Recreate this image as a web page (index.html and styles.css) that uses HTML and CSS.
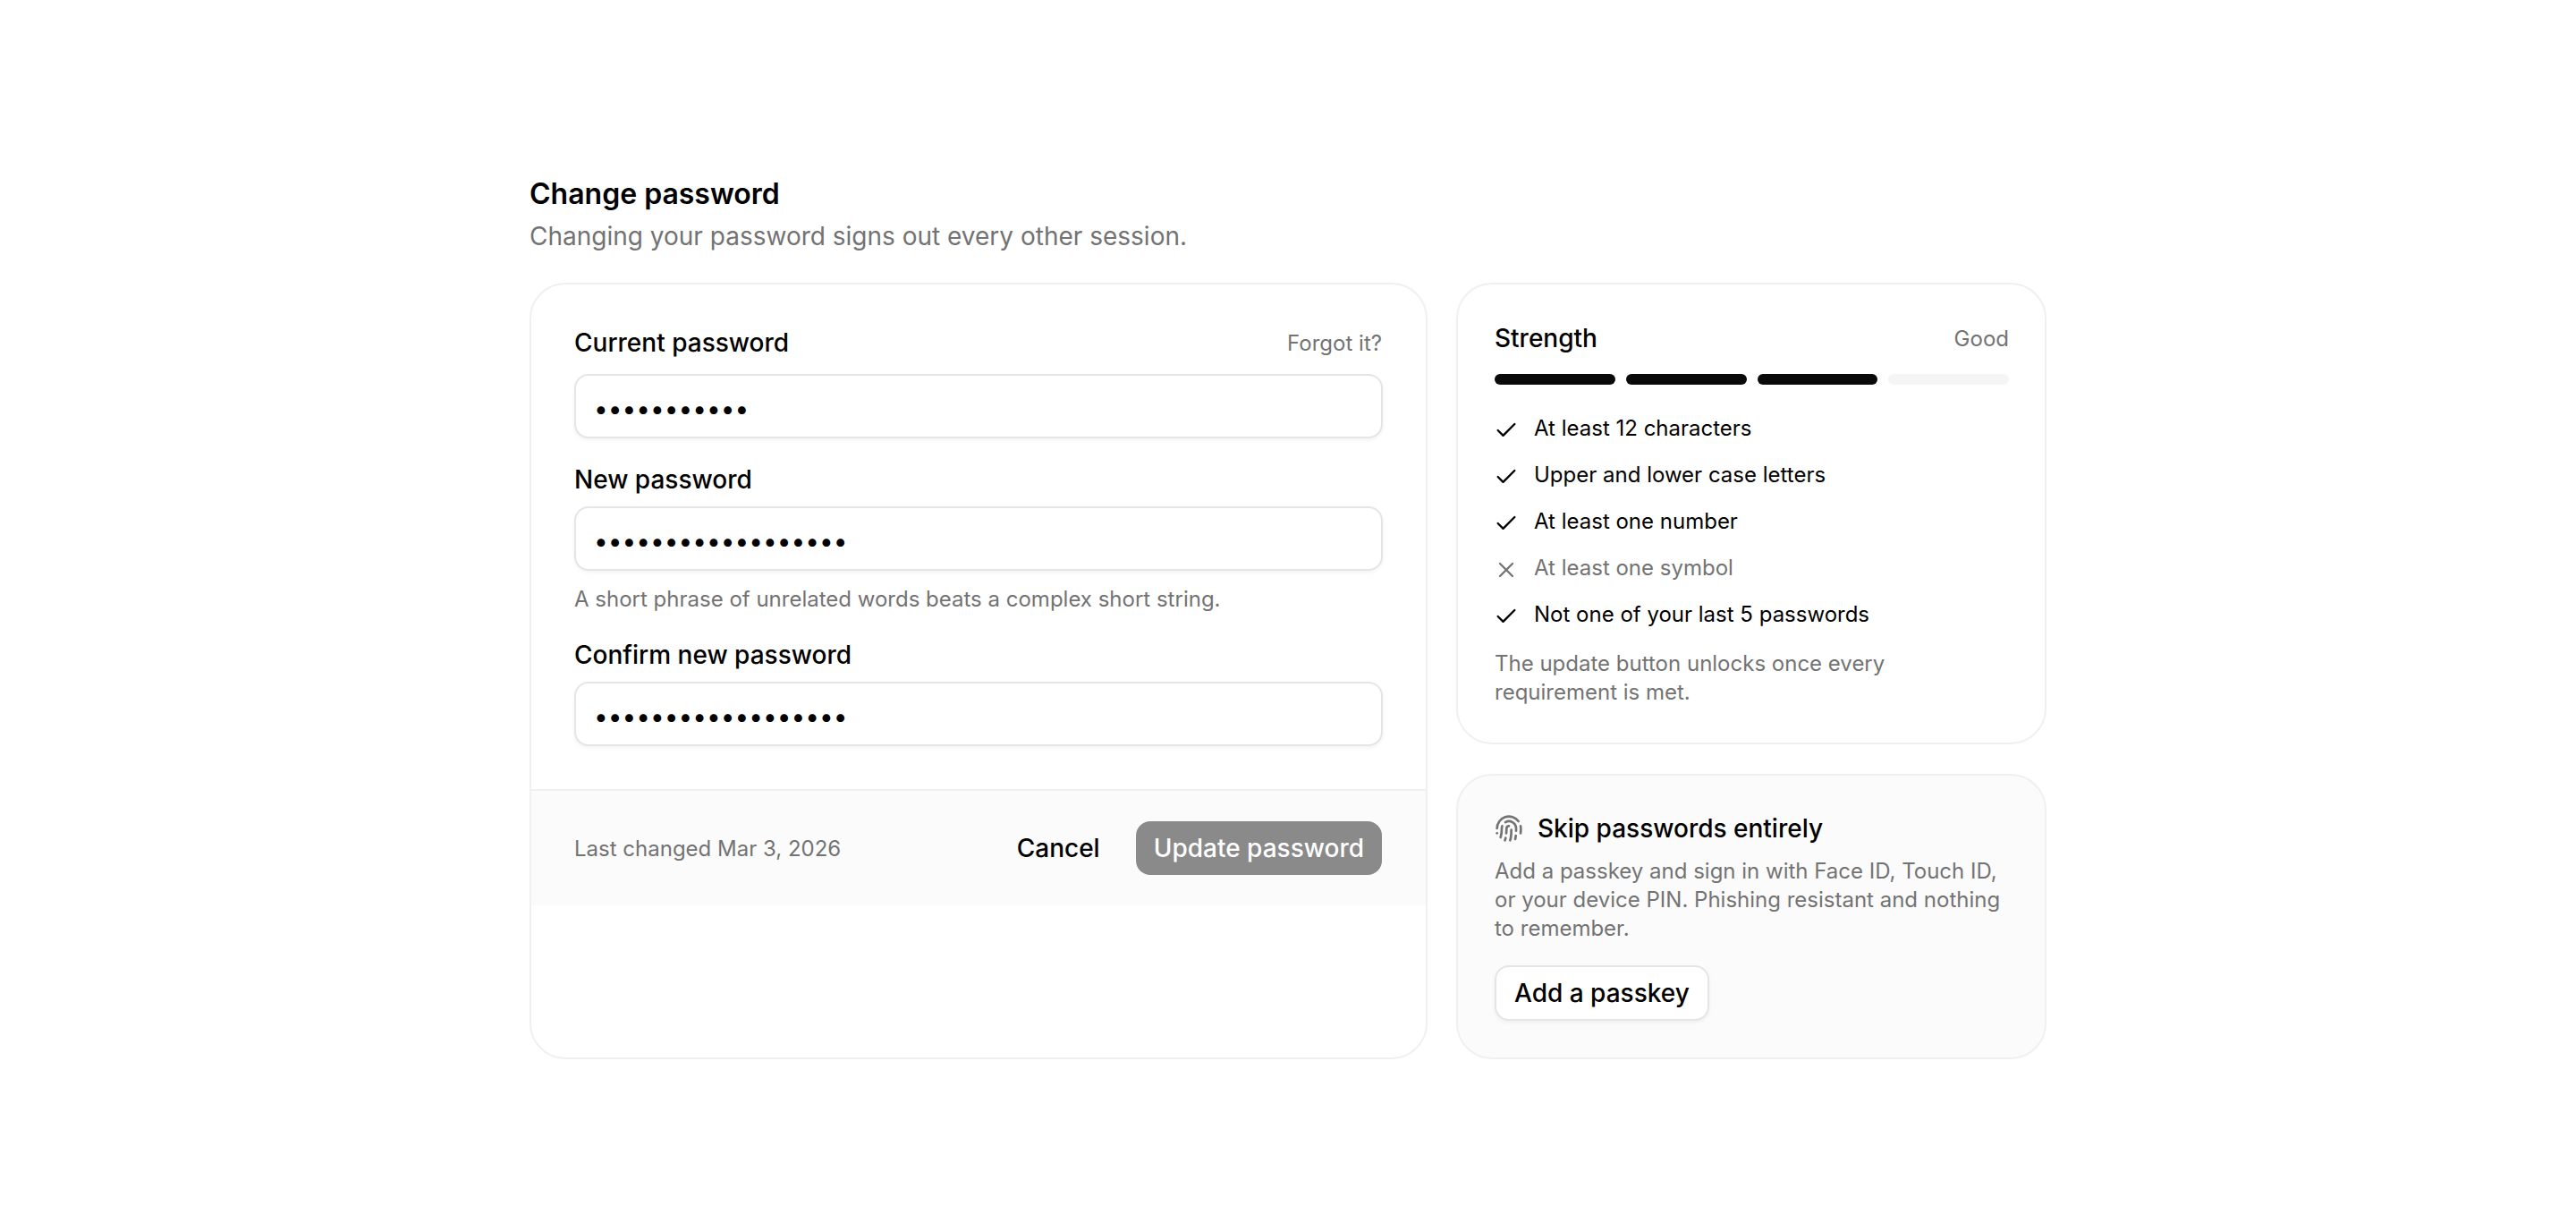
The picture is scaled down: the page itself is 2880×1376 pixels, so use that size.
FILE: index.html
```html
<!DOCTYPE html>
<html lang="en">
<head>
<meta charset="utf-8">
<title>Change password</title>
<link rel="stylesheet" href="styles.css">
</head>
<body>
<main class="page">
  <header class="head">
    <h1 class="title">Change password</h1>
    <p class="subtitle">Changing your password signs out every other session.</p>
  </header>
  <div class="grid">
    <section class="card form-card">
      <div class="fields">
        <div class="field field-first">
          <div class="label-row">
            <label class="label" for="cur">Current password</label>
            <a class="forgot">Forgot it?</a>
          </div>
          <input class="input" id="cur" type="password" value="abcdefghijk">
        </div>
        <div class="field">
          <label class="label" for="new">New password</label>
          <input class="input" id="new" type="password" value="abcdefghijklmnopqr">
          <p class="hint">A short phrase of unrelated words beats a complex short string.</p>
        </div>
        <div class="field">
          <label class="label" for="conf">Confirm new password</label>
          <input class="input" id="conf" type="password" value="abcdefghijklmnopqr">
        </div>
      </div>
      <footer class="footer">
        <span class="changed">Last changed Mar 3, 2026</span>
        <div class="actions">
          <button class="btn-ghost">Cancel</button>
          <button class="btn-primary">Update password</button>
        </div>
      </footer>
    </section>
    <aside class="side">
      <section class="card strength">
        <div class="strength-head">
          <span class="strength-title">Strength</span>
          <span class="strength-value">Good</span>
        </div>
        <div class="bars">
          <span class="bar on"></span><span class="bar on"></span><span class="bar on"></span><span class="bar"></span>
        </div>
        <ul class="reqs">
          <li class="req"><svg class="ic" viewBox="0 0 24 24"><path d="M20 6 9 17l-5-5"/></svg>At least 12 characters</li>
          <li class="req"><svg class="ic" viewBox="0 0 24 24"><path d="M20 6 9 17l-5-5"/></svg>Upper and lower case letters</li>
          <li class="req"><svg class="ic" viewBox="0 0 24 24"><path d="M20 6 9 17l-5-5"/></svg>At least one number</li>
          <li class="req off"><svg class="ic" viewBox="0 0 24 24"><path d="M18 6 6 18M6 6l12 12"/></svg>At least one symbol</li>
          <li class="req"><svg class="ic" viewBox="0 0 24 24"><path d="M20 6 9 17l-5-5"/></svg>Not one of your last 5 passwords</li>
        </ul>
        <p class="note">The update button unlocks once every requirement is met.</p>
      </section>
      <section class="card passkey">
        <div class="passkey-head">
          <svg class="fp" viewBox="0 0 24 24"><path d="M12 10a2 2 0 0 0-2 2c0 1.02-.1 2.51-.26 4"/><path d="M14 13.12c0 2.38 0 6.38-1 8.88"/><path d="M17.29 21.02c.12-.6.43-2.3.5-3.02"/><path d="M2 12a10 10 0 0 1 18-6"/><path d="M2 16h.01"/><path d="M21.8 16c.2-2 .131-5.354 0-6"/><path d="M5 19.5C5.5 18 6 15 6 12a6 6 0 0 1 .34-2"/><path d="M8.65 22c.21-.66.45-1.32.57-2"/><path d="M9 6.8a6 6 0 0 1 9 5.2v2"/></svg>
          <span class="passkey-title">Skip passwords entirely</span>
        </div>
        <p class="passkey-text">Add a passkey and sign in with Face ID, Touch ID, or your device PIN. Phishing resistant and nothing to remember.</p>
        <button class="btn-outline">Add a passkey</button>
      </section>
    </aside>
  </div>
</main>
</body>
</html>
```
FILE: styles.css
```css
* { box-sizing: border-box; }
html, body { margin: 0; padding: 0; background: #fff; }
body { font-family: Inter, "Liberation Sans", sans-serif; color: #000; }
.page { width: 1696px; margin: 0 auto; padding-top: 196px; }
.head { height: 120px; }
.title { margin: 0; font-size: 32px; line-height: 42px; font-weight: 600; }
.subtitle { margin: 6px 0 0; font-size: 28px; line-height: 40px; color: #737373; }
.grid { display: grid; grid-template-columns: 1004px 660px; gap: 32px; height: 868px; }
.card { border: 2px solid #f0f0f0; border-radius: 40px; background: #fff; }
.form-card { overflow: hidden; }
.fields { padding: 48px 48px 48px; display: flex; flex-direction: column; gap: 28px; }
.field { display: flex; flex-direction: column; }
.field-first { margin-bottom: 1px; }
.label-row { display: flex; justify-content: space-between; align-items: center; margin-bottom: 18px; padding-right: 1px; }
.label { font-size: 28px; line-height: 34px; font-weight: 500; margin-bottom: 13px; }
.label-row .label { margin-bottom: 0; }
.forgot { font-size: 24px; color: #737373; }
.input { height: 72px; width: 100%; border: 2px solid #e5e5e5; border-radius: 16px; background: #fff; box-shadow: 0 2px 4px rgba(0,0,0,.05); padding: 6px 20px 0; font-family: Inter, sans-serif; font-size: 28px; color: #000; outline: none; }
.hint { margin: 15px 0 0; font-size: 24px; line-height: 34px; color: #737373; }
.footer { height: 130px; border-top: 2px solid #f0f0f0; background: #fbfbfb; padding: 0 49px 0 48px; display: flex; align-items: center; justify-content: space-between; }
.changed { font-size: 24px; color: #737373; }
.actions { display: flex; align-items: center; gap: 20px; }
button { font-family: Inter, sans-serif; }
.btn-ghost { border: 0; background: transparent; height: 60px; padding: 0 20px; font-size: 28px; font-weight: 500; color: #000; }
.btn-primary { border: 0; background: #8a8a8a; color: #fff; height: 60px; padding: 0 20px; border-radius: 16px; font-size: 28px; font-weight: 500; }
.side { display: flex; flex-direction: column; gap: 33px; }
.strength { height: 516px; padding: 40px 40px 40px 41px; }
.strength-head { display: flex; justify-content: space-between; align-items: center; height: 40px; }
.strength-title { font-size: 28px; font-weight: 500; }
.strength-value { font-size: 24px; color: #737373; }
.bars { display: flex; gap: 12px; margin-top: 20px; }
.bar { flex: 1; height: 12px; border-radius: 6px; background: #f5f5f5; }
.bar.on { background: #0a0a0a; }
.reqs { list-style: none; margin: 31px 0 0; padding: 0; display: flex; flex-direction: column; gap: 16px; }
.req { display: flex; align-items: center; gap: 17px; font-size: 24px; line-height: 36px; }
.req.off { color: #737373; }
.ic { width: 28px; height: 28px; margin: 3px 0 0 -1px; flex: none; fill: none; stroke: currentColor; stroke-width: 2; stroke-linecap: round; stroke-linejoin: round; }
.note { margin: 21px 0 0; font-size: 24px; line-height: 32px; color: #737373; }
.passkey { flex: 1; background: #fbfbfb; padding: 39px 40px 40px 41px; }
.passkey-head { display: flex; align-items: center; gap: 16px; height: 40px; }
.fp { width: 32px; height: 32px; flex: none; fill: none; stroke: #737373; stroke-width: 2; stroke-linecap: round; stroke-linejoin: round; }
.passkey-title { font-size: 28px; font-weight: 500; }
.passkey-text { margin: 12px 0 0; font-size: 24px; line-height: 32px; color: #737373; }
.btn-outline { margin-top: 25px; height: 62px; padding: 0 20px; border: 2px solid #e5e5e5; border-radius: 16px; background: #fff; box-shadow: 0 2px 4px rgba(0,0,0,.05); font-size: 28px; font-weight: 500; color: #000; }
```
